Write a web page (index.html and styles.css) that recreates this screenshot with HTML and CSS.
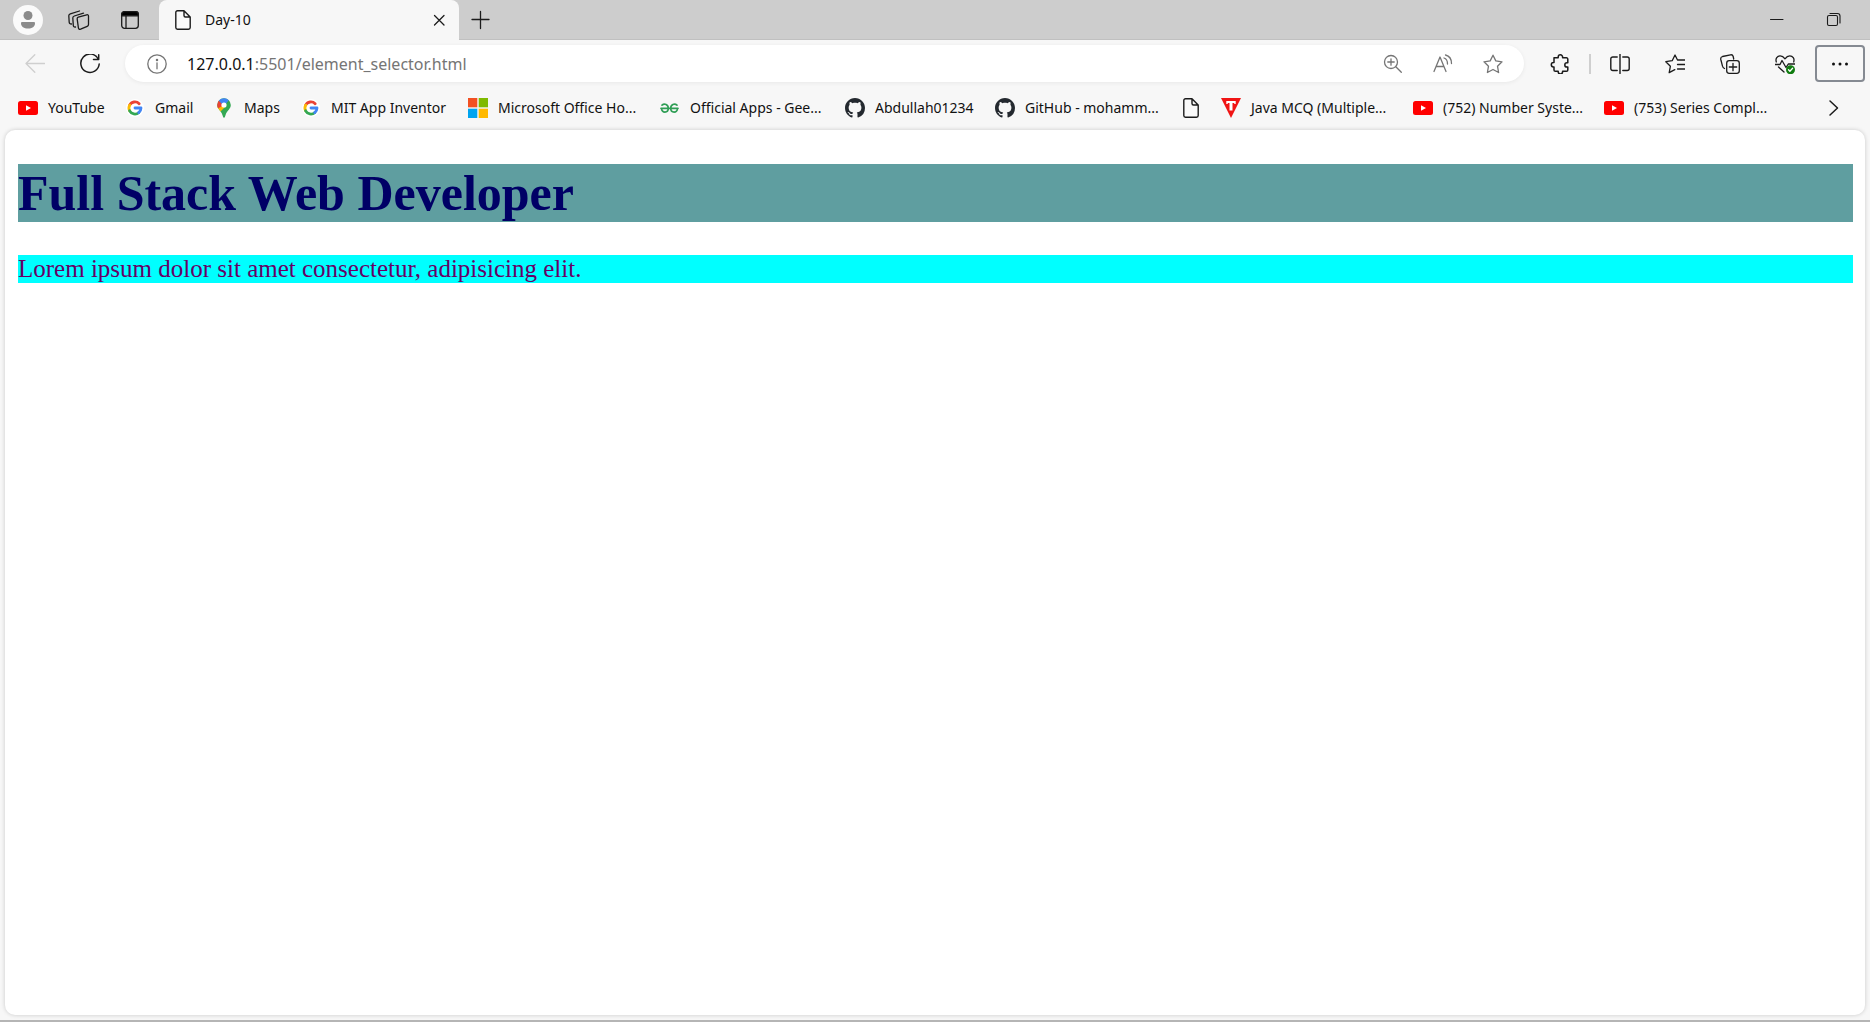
FILE: index.html
```html
<!DOCTYPE html>
<html lang="en">
<head>
<meta charset="utf-8">
<title>Day-10</title>
<link rel="stylesheet" href="styles.css">
</head>
<body>
<svg class="defs" aria-hidden="true">
  <symbol id="doc" viewBox="0 0 20 20"><path d="M4.500 .8H11L17.200 7V17.500a1.700 1.700 0 0 1-1.700 1.700H4.500a1.700 1.700 0 0 1-1.700-1.700V2.500A1.700 1.700 0 0 1 4.500 .8ZM11 .8V5.500A1.500 1.500 0 0 0 12.500 7h4.700" fill="#fafafa" stroke="#1b1b1b" stroke-width="1.400" stroke-linejoin="round"/></symbol>
  <symbol id="yt" viewBox="0 0 20 20"><rect y="3" width="20" height="14" rx="2.500" fill="#f00"/><path d="M8 7.200v5.600l5-2.800z" fill="#fff"/></symbol>
  <symbol id="google" viewBox="0 0 20 20"><circle cx="10" cy="10" r="9" fill="#fff"/><g fill="none" stroke-width="2.800"><path d="M4.600 7.200A6 6 0 0 1 14.200 5.700" stroke="#ea4335"/><path d="M4.700 7.100a6 6 0 0 0 0 5.800" stroke="#fbbc05"/><path d="M4.600 12.800a6 6 0 0 0 9.300 1.700" stroke="#34a853"/><path d="M13.700 14.700A6 6 0 0 0 16 10H10" stroke="#4285f4"/></g></symbol>
  <symbol id="github" viewBox="0 0 16 16"><path fill="#24292f" d="M8 0C3.580 0 0 3.580 0 8c0 3.540 2.290 6.530 5.470 7.590.4.070.55-.17.55-.38 0-.19-.01-.82-.01-1.490-2.010.37-2.530-.49-2.690-.94-.09-.23-.48-.94-.82-1.130-.28-.15-.68-.52-.01-.53.63-.01 1.080.58 1.230.82.72 1.210 1.870.87 2.330.66.070-.52.280-.87.510-1.070-1.780-.2-3.640-.89-3.640-3.950 0-.87.310-1.590.82-2.150-.08-.2-.36-1.020.08-2.120 0 0 .67-.21 2.200.82.640-.18 1.320-.27 2-.27s1.360.09 2 .27c1.530-1.040 2.200-.82 2.200-.82.440 1.100.160 1.920.08 2.120.510.560.820 1.270.820 2.150 0 3.070-1.870 3.750-3.650 3.950.290.250.540.730.540 1.480 0 1.070-.01 1.930-.01 2.200 0 .210.150.460.550.380A8.010 8.010 0 0 0 16 8c0-4.420-3.580-8-8-8Z"/></symbol>
</svg>

<header class="tabstrip">
  <button class="strip-btn" aria-label="Profile"><svg class="avatar" viewBox="0 0 30 30"><circle cx="15" cy="15" r="15" fill="#fafafa"/><circle cx="15" cy="10.500" r="4.500" fill="#8b8b8b"/><path d="M8 18a1 1 0 0 1 1-1h12a1 1 0 0 1 1 1c0 4-3 5.500-7 5.500S8 22 8 18Z" fill="#8b8b8b"/></svg></button>
  <button class="strip-btn" aria-label="Workspaces"><svg class="icon wide" viewBox="0 0 22 20"><path d="M10.300 7.200 18.700 4.800q1.800-.4 1.800 1.400v8.200q0 1.300-1.300 1.900l-6.600 2.900q-1.900.6-2.200-1.300L9.200 9.200q-.2-1.600 1.100-2ZM7.500 17q-2 .3-2.200-1.500L4.800 8q0-1.500 1.500-2L15.500 3.200M3.500 14Q1.300 14 1.200 12.200L.8 5.800q0-1.500 1.500-2L11.500 1"/></svg></button>
  <button class="strip-btn" aria-label="Tab actions"><svg class="icon" viewBox="0 0 20 20"><rect x="1.700" y="1.700" width="16.600" height="16.600" rx="2.800"/><path d="M1.700 5.800V4.500a2.800 2.800 0 0 1 2.800-2.800h11a2.800 2.800 0 0 1 2.800 2.800v1.300Z" fill="#000"/><path d="M6 6v12"/></svg></button>
  <div class="tab">
    <svg class="icon"><use href="#doc"/></svg>
    <span class="tab-title">Day-10</span>
    <button class="close" aria-label="Close tab"><svg class="icon" viewBox="0 0 20 20"><path d="m5.500 5.500 9.500 9.500m0-9.500-9.500 9.500"/></svg></button>
  </div>
  <button class="new-tab" aria-label="New tab"><svg class="icon" viewBox="0 0 20 20"><path d="M10.500 1.500v17M2 9.500h17"/></svg></button>
  <div class="window-controls">
    <button aria-label="Minimize"><svg class="icon" viewBox="0 0 20 20"><path d="M3.500 9.500h12.500" stroke-width="1"/></svg></button>
    <button aria-label="Restore"><svg class="icon" viewBox="0 0 20 20"><g stroke-width="1.100"><rect x="3.500" y="5.500" width="10" height="10" rx="1.500"/><path d="M6 3.500h7.500a2.500 2.500 0 0 1 2.500 2.500v7"/></g></svg></button>
  </div>
</header>

<nav class="toolbar" aria-label="Browser toolbar">
  <button class="tool" aria-label="Back" disabled><svg class="icon faint" viewBox="0 0 20 20"><path d="M19.500 9.500H1M9.800.8 1 9.500l8.800 8.700"/></svg></button>
  <button class="tool" aria-label="Refresh"><svg class="icon" viewBox="0 0 20 20"><path d="M18.200 5A9.200 9.200 0 1 0 19.200 10M18.700 .8V5.500H13.500" stroke-width="1.500"/></svg></button>
  <div class="address">
    <svg class="icon grey" viewBox="0 0 20 20"><circle cx="10" cy="10" r="9.200"/><path d="M10 8.800v6"/><circle cx="10" cy="6" r=".6"/></svg>
    <a class="url" href="#page"><span class="host">127.0.0.1</span>:5501/element_selector.html</a>
    <button aria-label="Zoom"><svg class="icon grey" viewBox="0 0 20 20"><circle cx="8" cy="8" r="6.500"/><path d="m12.800 12.800 5.500 5.500M8 4.800v6.400M4.800 8h6.400"/></svg></button>
    <button aria-label="Read aloud"><svg class="icon grey" viewBox="0 0 20 20"><path d="M1 17.500 7 3l6 14.500M3.300 12.500h7.600M11 4q3.500 1 3.500 6M12.500 1q6 1.500 6 8.500"/></svg></button>
    <button aria-label="Add to favorites"><svg class="icon grey" viewBox="0 0 20 20"><path d="m10 1.200 2.800 5.700 6.200.9-4.500 4.400 1.100 6.300L10 15.500l-5.600 3 1.100-6.300L1 7.800l6.200-.9Z"/></svg></button>
  </div>
  <button class="tool" aria-label="Extensions"><svg class="icon" viewBox="0 0 20 20"><path stroke-width="1.500" d="M4 3.800H8.200V3a2.200 2.200 0 0 1 4.400 0v.8h3.900a1.300 1.300 0 0 1 1.300 1.300v3.600h-.8a2.200 2.200 0 0 0 0 4.400h.8V16a1.300 1.300 0 0 1-1.300 1.300h-3.900v.5a2.200 2.200 0 0 1-4.400 0v-.5H5.300A1.300 1.300 0 0 1 4 16v-3h-.5a2.200 2.200 0 0 1 0-4.400H4Z"/></svg></button>
  <span class="separator"></span>
  <button class="tool" aria-label="Split screen"><svg class="icon" viewBox="0 0 20 20"><path stroke-width="1.400" d="M7.200 3H2.800A2 2 0 0 0 .8 5v9.500a2 2 0 0 0 2 2h4.400M12.800 3h4.400a2 2 0 0 1 2 2v9.500a2 2 0 0 1-2 2h-4.400M10 .3v19.200"/></svg></button>
  <button class="tool" aria-label="Favorites"><svg class="icon" viewBox="0 0 20 20"><path d="M12.500 6 10 1 7.200 6.700l-6.400 1 4.600 4.500-1.200 6.400 5.600-3M12.500 6H20M12.500 10.500H20M12.500 15H20"/></svg></button>
  <button class="tool" aria-label="Collections"><svg class="icon" viewBox="0 0 20 20"><path d="M4.500 14.500Q3 14 2.500 12.200L.8 5.500Q.3 3.200 2.500 2.500L10.500 .8q2.100-.4 2.700 1.700l.5 2.500"/><rect x="6.700" y="6.700" width="12.600" height="12.600" rx="2.500"/><path d="M13 9.300v7.400M9.300 13h7.400"/></svg></button>
  <button class="tool" aria-label="Browser essentials"><svg class="icon" viewBox="0 0 20 20"><path d="M1.300 8C.2 4.500 2.300 1.800 5.200 1.800c2.400 0 3.600 1.300 4.800 3 1.200-1.700 2.400-3 4.800-3 2.900 0 5 2.700 3.900 6.200M0 10.500h5l2-4 4 7 2.300-3.500H20M3.500 13l5.500 5"/><circle cx="15.500" cy="15.700" r="4.500" fill="#107c10" stroke="none"/><path d="m13.500 15.800 1.400 1.400 2.700-2.900" stroke="#fff"/></svg></button>
  <button class="tool focused" aria-label="Settings and more"><svg class="icon" viewBox="0 0 20 20"><g fill="#111" stroke="none"><circle cx="3.500" cy="10" r="1.500"/><circle cx="10" cy="10" r="1.500"/><circle cx="16.500" cy="10" r="1.500"/></g></svg></button>
</nav>

<nav class="bookmarks" aria-label="Favorites bar">
  <a href="#page"><svg class="icon"><use href="#yt"/></svg>YouTube</a>
  <a href="#page"><svg class="icon"><use href="#google"/></svg>Gmail</a>
  <a href="#page"><svg class="icon" viewBox="0 0 20 20"><clipPath id="pin"><path d="M10 .3a6.800 6.800 0 0 1 6.800 6.800c0 4.200-4 5.600-5.300 10.200Q10.800 20 10 20t-1.500-2.700C7.200 12.700 3.200 11.300 3.200 7.100A6.800 6.800 0 0 1 10 .3Z"/></clipPath><g clip-path="url(#pin)" stroke="none"><path d="M0 0h20v20H0z" fill="#34a853"/><path d="m0 12 9-8 2 5-6 6z" fill="#fbbc04"/><path d="m2 2 3 0 5 5-7 4z" fill="#ea4335"/><path d="M5 0h15l-5 2-5 6-5-5z" fill="#4285f4"/><circle cx="10" cy="7" r="2.600" fill="#fff"/></g></svg>Maps</a>
  <a href="#page"><svg class="icon"><use href="#google"/></svg>MIT App Inventor</a>
  <a href="#page"><svg class="icon" viewBox="0 0 20 20"><g stroke="none"><path fill="#f25022" d="M0 0h9.300v9.300H0z"/><path fill="#7fba00" d="M10.700 0H20v9.300h-9.300z"/><path fill="#00a4ef" d="M0 10.700h9.300V20H0z"/><path fill="#ffb900" d="M10.700 10.700H20V20h-9.300z"/></g></svg>Microsoft Office Ho...</a>
  <a href="#page"><svg class="icon" viewBox="0 0 20 20"><path stroke="#2f9e55" stroke-width="1.700" d="M1 10.300h17M2 7.200C4.500 5 8.300 6.500 8.300 10.300c0 5-6.800 5-6.800 0M17 7.200c-2.500-2.200-6.300-.7-6.300 3.100 0 5 6.800 5 6.800 0"/></svg>Official Apps - Gee...</a>
  <a href="#page"><svg class="icon"><use href="#github"/></svg>Abdullah01234</a>
  <a href="#page"><svg class="icon"><use href="#github"/></svg>GitHub - mohamm...</a>
  <a href="#page" aria-label="Untitled page"><svg class="icon"><use href="#doc"/></svg></a>
  <a href="#page"><svg class="icon" viewBox="0 0 20 20"><g stroke="none"><path d="M0 0h20L10 20z" fill="#f01414"/><path d="M5.300 3h9.400v3h-1.200l-.5-1h-1.500v7.500H8.500V5H7l-.5 1H5.300z" fill="#fff"/></g></svg>Java MCQ (Multiple...</a>
  <a href="#page"><svg class="icon"><use href="#yt"/></svg>(752) Number Syste...</a>
  <a href="#page"><svg class="icon"><use href="#yt"/></svg>(753) Series Compl...</a>
  <button aria-label="More favorites"><svg class="icon" viewBox="0 0 20 20"><path stroke-width="1.500" d="m6 3 7.500 7L6 17"/></svg></button>
</nav>

<main class="page" id="page">
  <h1>Full Stack Web Developer</h1>
  <p>Lorem ipsum dolor sit amet consectetur, adipisicing elit.</p>
</main>
</body>
</html>
```
FILE: styles.css
```css
* { box-sizing: border-box; }

body {
  margin: 0;
  min-height: 100vh;
  display: flex;
  flex-direction: column;
  background: #f7f7f7;
  border-bottom: 2px solid #b5b5b5;
  color: #111;
  font: 14px/20px "Noto Sans", sans-serif;
}

.defs { display: none; }

button {
  display: flex;
  align-items: center;
  justify-content: center;
  padding: 0;
  border: 0;
  background: none;
}

a { color: inherit; text-decoration: none; }

.icon {
  width: 20px;
  height: 20px;
  flex: none;
  fill: none;
  stroke: #1b1b1b;
  stroke-width: 1.3;
  stroke-linecap: round;
  stroke-linejoin: round;
}
.icon use { stroke: none; }
.icon.wide { width: 22px; }
.icon.grey { stroke: #757575; }
.icon.faint { stroke: #cfcfcf; }

.tabstrip {
  display: flex;
  height: 40px;
  padding: 0 8px 0 3px;
  background: #cdcdcd;
  border-bottom: 1px solid #c0c0c0;
}
.strip-btn { width: 50px; height: 40px; margin-right: 1px; }
.avatar { width: 30px; height: 30px; }

.tab {
  display: flex;
  align-items: center;
  width: 300px;
  height: 40px;
  margin-left: 3px;
  padding: 0 10px 0 14px;
  background: #f7f7f7;
  border-radius: 8px 8px 0 0;
}
.tab-title { flex: 1; margin-left: 12px; }
.close { width: 20px; height: 20px; }
.new-tab { width: 42px; height: 40px; }
.window-controls { display: flex; margin-left: auto; }
.window-controls button { width: 57px; height: 40px; }

.toolbar {
  display: flex;
  align-items: center;
  gap: 5px;
  padding: 5px 5px 5px 10px;
}
.tool { width: 50px; height: 37px; }
.focused { border: 2px solid #858a92; border-radius: 4px; }
.separator { width: 2px; height: 20px; margin: 0 -1px; background: #cfcfcf; }

.address {
  display: flex;
  align-items: center;
  flex: 1;
  gap: 10px;
  height: 37px;
  margin: 0 6px 0 5px;
  padding: 0 11px 0 22px;
  background: #fff;
  border-radius: 19px;
  box-shadow: 0 1px 4px #00000010;
}
.address button { width: 40px; height: 37px; }
.url { flex: 1; margin-left: 10px; font-size: 16px; color: #757575; }
.host { color: #111; }

.bookmarks {
  display: grid;
  grid-template-columns: 107px 89px 87px 167px 192px 185px 150px 186px 40px 192px 191px 191px 1fr;
  align-items: center;
  height: 43px;
  padding: 0 26px 2px 18px;
}
.bookmarks a { display: flex; align-items: center; gap: 10px; white-space: nowrap; }
.bookmarks button { justify-self: end; }

.page {
  flex: 1;
  margin: 0 5px 5px;
  padding: 34px 12px 34px 13px;
  background: #fff;
  border-radius: 10px;
  box-shadow: 0 0 4px #00000030;
  font-family: "Liberation Serif", "Times New Roman", serif;
}
.page h1 {
  margin: 0 0 33px;
  background: cadetblue;
  color: #000066;
  font-size: 50px;
  line-height: 58px;
}
.page p {
  margin: 0;
  background: aqua;
  color: #660066;
  font-size: 25px;
  line-height: 28px;
}
```
